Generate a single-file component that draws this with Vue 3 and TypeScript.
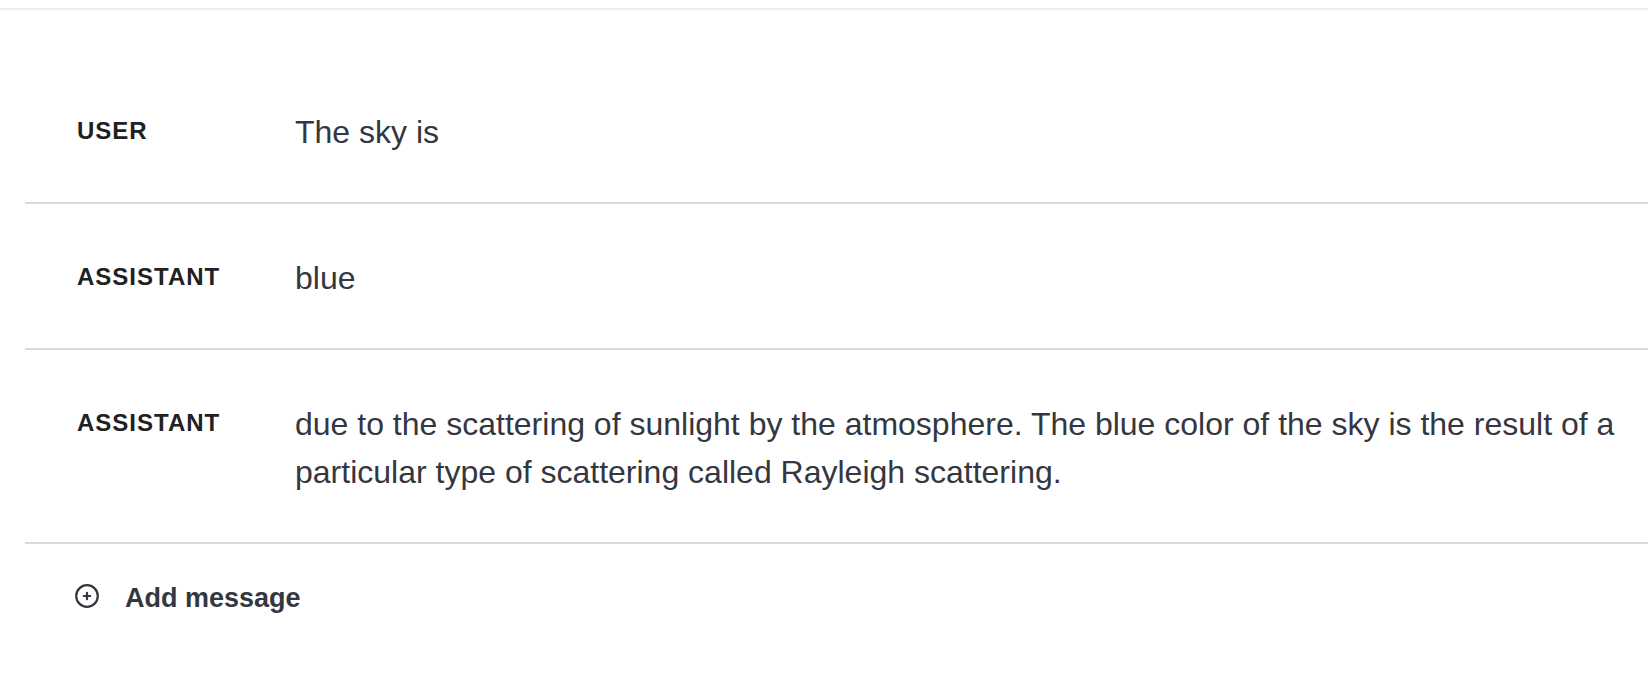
<script setup lang="ts">
import { ref } from 'vue'

interface Message {
  id: number
  role: 'user' | 'assistant'
  content: string
}

const messages = ref<Message[]>([
  { id: 1, role: 'user', content: 'The sky is' },
  { id: 2, role: 'assistant', content: 'blue' },
  {
    id: 3,
    role: 'assistant',
    content:
      'due to the scattering of sunlight by the atmosphere. The blue color of the sky is the result of a particular type of scattering called Rayleigh scattering.',
  },
])

function addMessage(): void {
  const last = messages.value[messages.value.length - 1]
  messages.value.push({
    id: messages.value.length + 1,
    role: last?.role === 'user' ? 'assistant' : 'user',
    content: '',
  })
}
</script>

<template>
  <main class="playground">
    <section class="chat">
      <article v-for="message in messages" :key="message.id" class="message">
        <h2 class="role">{{ message.role }}</h2>
        <p class="content">{{ message.content }}</p>
      </article>
      <button type="button" class="add" @click="addMessage">
        <svg class="add-icon" viewBox="0 0 24 24" fill="none" aria-hidden="true">
          <circle cx="12" cy="12" r="10.8" stroke="currentColor" stroke-width="2.2" />
          <path d="M12 8.8v6.4M8.8 12h6.4" stroke="currentColor" stroke-width="2.2" stroke-linecap="round" />
        </svg>
        <span>Add message</span>
      </button>
    </section>
  </main>
</template>

<style>
body {
  margin: 0;
  background: #fff;
}
</style>

<style scoped>
.playground {
  margin-top: 8px;
  border-top: 2px solid #ececf1;
  padding: 48px 0 48px 25px;
  color: #353740;
  font-family: 'Liberation Sans', Arial, Helvetica, sans-serif;
}

.message {
  display: grid;
  grid-template-columns: 170px minmax(0, 1fr);
  column-gap: 48px;
  padding: 50px 32px 46px 52px;
  border-bottom: 2px solid #d9d9e3;
}

.role {
  margin: 0;
  color: #202123;
  font-size: 24px;
  font-weight: 700;
  line-height: 46px;
  letter-spacing: 1px;
  text-transform: uppercase;
}

.content {
  margin: 0;
  min-height: 48px;
  font-size: 32px;
  line-height: 48px;
}

.add {
  display: flex;
  align-items: center;
  gap: 26px;
  margin: 24px 0 0 50px;
  padding: 10px 0;
  border: 0;
  background: none;
  color: inherit;
  font: inherit;
  font-size: 27px;
  font-weight: 700;
  line-height: 40px;
  cursor: pointer;
}

.add-icon {
  width: 24px;
  height: 24px;
  margin-bottom: 4px;
  overflow: visible;
}
</style>
